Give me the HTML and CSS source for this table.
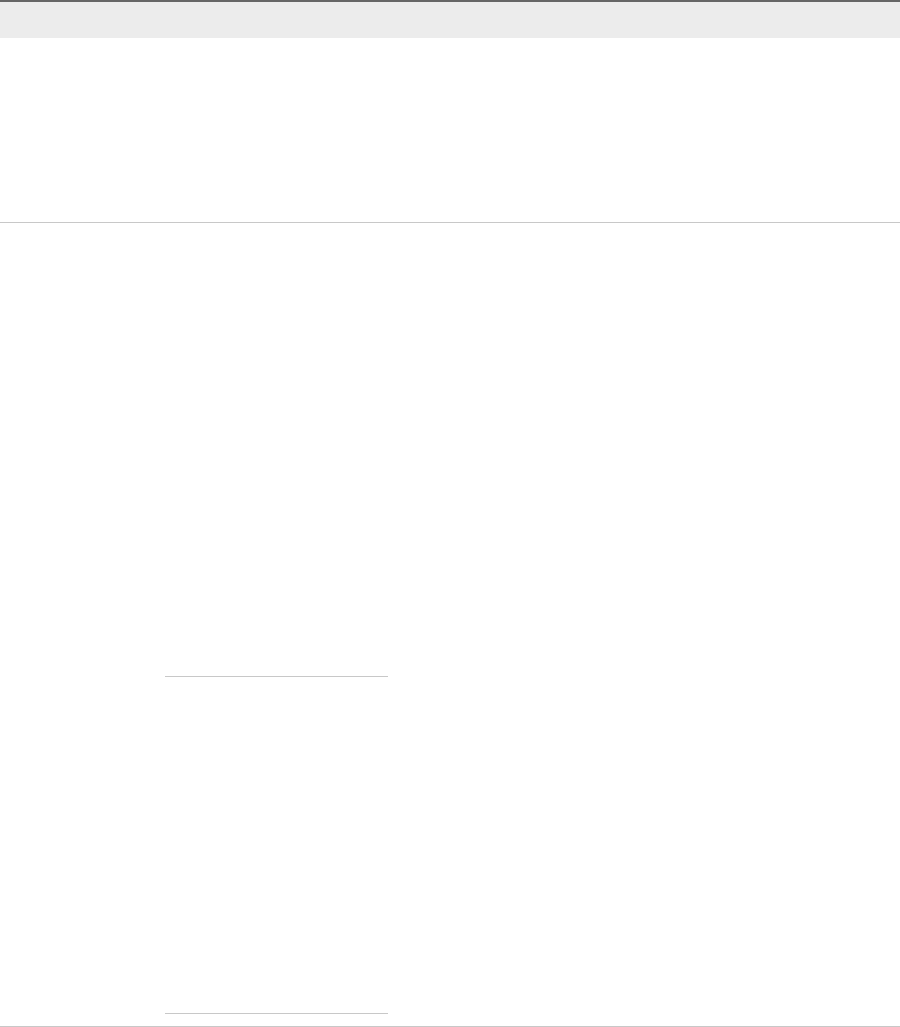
FILE: index.html
```html
<!DOCTYPE html>
<html lang="en">
<head>
    <meta charset="UTF-8">
    <meta name="viewport" content="width=device-width, initial-scale=1.0">
    <title>Page</title>
    <link rel="stylesheet" href="styles.css">
</head>
<body>
<div class="topbar"></div>
<div class="hero"></div>
<div class="main">
    <div class="sidecol">
        <div class="block block-first"></div>
        <div class="block block-second"></div>
    </div>
</div>
</body>
</html>
```
FILE: styles.css
```css
body {
    margin: 0;
    background-color: #ffffff;
    font-family: "Liberation Sans", Arial, sans-serif;
}

.topbar {
    border-top: 2px solid #666666;
    height: 36px;
    background-color: #ececec;
}

.hero {
    height: 184px;
    border-bottom: 1px solid #c8c8c8;
}

.main {
    padding-left: 165px;
    border-bottom: 1px solid #c8c8c8;
}

.sidecol {
    width: 223px;
    padding-bottom: 12px;
}

.block {
    border-bottom: 1px solid #c8c8c8;
}

.block-first {
    height: 453px;
}

.block-second {
    height: 336px;
}
```
